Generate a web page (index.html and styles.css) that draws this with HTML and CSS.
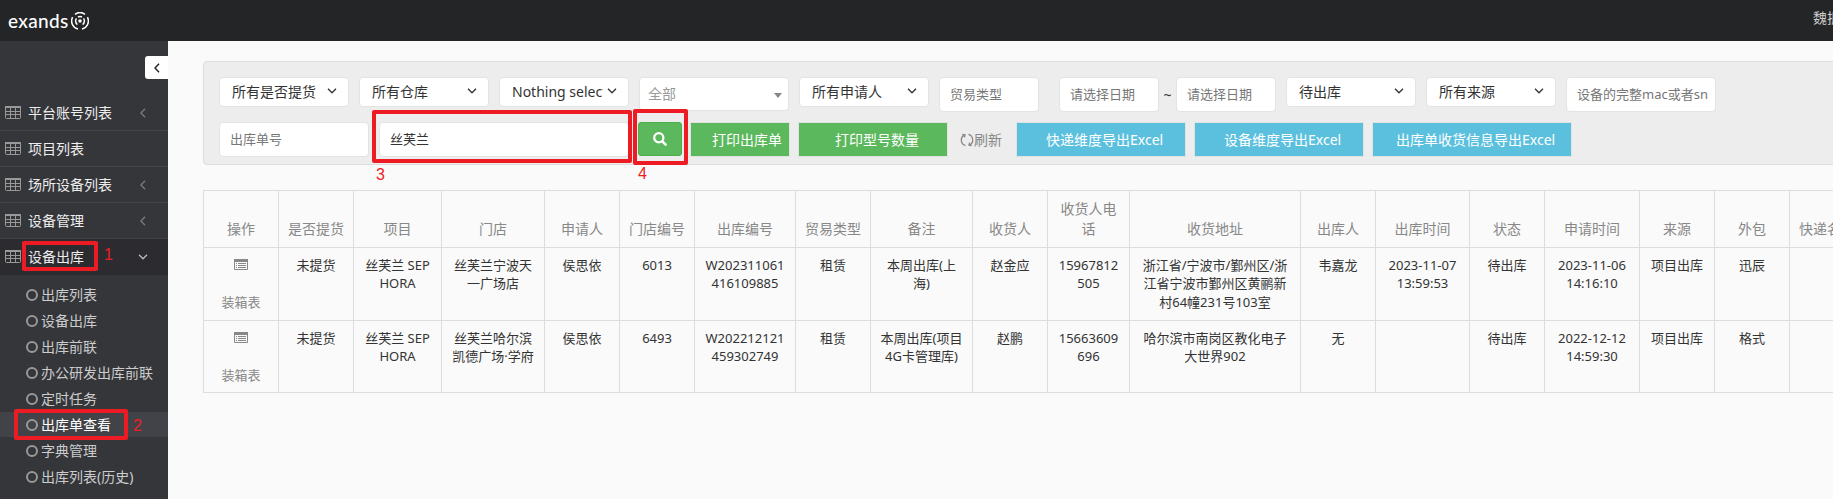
FILE: index.html
```html
<!DOCTYPE html>
<html lang="zh-CN">
<head>
<meta charset="utf-8">
<title>出库单查看</title>
<link rel="stylesheet" href="styles.css">
</head>
<body>
<svg class="defs" width="0" height="0">
  <symbol id="grid" viewBox="0 0 16 13"><path d="M.5 1v10.500q0 1 1 1h13q1 0 1-1V1z" fill="none" stroke="currentColor"/><path d="M0 0h16v2H0z" fill="currentColor"/><path d="M1 5.500h14M1 8.500h14M5.500 2v10M10.500 2v10" fill="none" stroke="currentColor"/></symbol>
  <symbol id="left" viewBox="0 0 6 10"><path d="M5 .8 1 5l4 4.200" fill="none" stroke="currentColor" stroke-width="1.400"/></symbol>
  <symbol id="down" viewBox="0 0 10 6"><path d="M1 .8 5 4.800l4-4" fill="none" stroke="currentColor" stroke-width="1.300"/></symbol>
  <symbol id="list" viewBox="0 0 14 11"><path d="M.5 1h13v9.500H.5z" fill="none" stroke="currentColor"/><path d="M0 0h14v3H0z" fill="currentColor"/><path d="M2 4.500h1M4 4.500h8M2 6.500h1M4 6.500h8M2 8.500h1M4 8.500h8" stroke="currentColor"/></symbol>
</svg>
<header class="topbar">
  <div class="logo"><span>exands</span>
    <svg width="18" height="18" viewBox="0 0 18 18" fill="none" stroke="#fff" stroke-width="1.500"><circle cx="9" cy="9" r="1.800" fill="#fff" stroke="none"/><path d="M6.400 12.600a4.400 4.400 0 0 1-.9-6.200M11.600 12.600a4.400 4.400 0 0 0 .9-6.200M7 5a4.500 4.500 0 0 1 4 0M4 2.300a8.400 8.400 0 0 1 10 0M1.600 5.200A8.300 8.300 0 0 0 7 17.100M16.400 5.200A8.300 8.300 0 0 1 11 17.100"/></svg>
  </div>
  <div class="user">魏振</div>
</header>
<div class="layout">
  <nav class="sidebar">
    <button class="collapse"><svg width="6" height="10"><use href="#left"/></svg></button>
    <ul class="menu">
      <li><svg class="mi" width="16" height="13"><use href="#grid"/></svg>平台账号列表<svg class="arr" width="6" height="10"><use href="#left"/></svg></li>
      <li><svg class="mi" width="16" height="13"><use href="#grid"/></svg>项目列表</li>
      <li><svg class="mi" width="16" height="13"><use href="#grid"/></svg>场所设备列表<svg class="arr" width="6" height="10"><use href="#left"/></svg></li>
      <li><svg class="mi" width="16" height="13"><use href="#grid"/></svg>设备管理<svg class="arr" width="6" height="10"><use href="#left"/></svg></li>
      <li class="open"><svg class="mi" width="16" height="13"><use href="#grid"/></svg>设备出库<svg class="arr" width="10" height="6"><use href="#down"/></svg></li>
    </ul>
    <ul class="submenu">
      <li>出库列表</li><li>设备出库</li><li>出库前联</li><li>办公研发出库前联</li><li>定时任务</li><li class="active">出库单查看</li><li>字典管理</li><li>出库列表(历史)</li>
    </ul>
  </nav>
  <main class="content">
    <section class="filters">
      <div class="frow">
        <div class="sel"><span>所有是否提货</span><svg width="10" height="6"><use href="#down"/></svg></div>
        <div class="sel"><span>所有仓库</span><svg width="10" height="6"><use href="#down"/></svg></div>
        <div class="sel"><span>Nothing selected</span><svg width="10" height="6"><use href="#down"/></svg></div>
        <div class="combo"><span>全部</span><i></i></div>
        <div class="sel"><span>所有申请人</span><svg width="10" height="6"><use href="#down"/></svg></div>
        <div class="inp w100">贸易类型</div>
        <div class="range"><div class="inp w100">请选择日期</div><span>~</span><div class="inp w100">请选择日期</div></div>
        <div class="sel"><span>待出库</span><svg width="10" height="6"><use href="#down"/></svg></div>
        <div class="sel"><span>所有来源</span><svg width="10" height="6"><use href="#down"/></svg></div>
        <div class="inp w150">设备的完整mac或者sn</div>
      </div>
      <div class="frow second">
        <div class="inp w150">出库单号</div>
        <div class="inp w250 filled">丝芙兰</div>
        <button class="search"><svg width="14" height="14" viewBox="0 0 14 14" fill="none" stroke="#fff"><circle cx="5.800" cy="5.800" r="4.600" stroke-width="2.200"/><path d="m9.300 9.300 3.300 3.300" stroke-width="2.600" stroke-linecap="round"/></svg></button>
        <div class="btn green b1">打印出库单</div>
        <div class="btn green b2">打印型号数量</div>
        <div class="refresh"><svg width="14" height="14" viewBox="0 0 14 14" fill="none" stroke="#888" stroke-width="1.300"><path d="M5.500 12.600A5.800 5.800 0 0 1 4.600 1.800M8.500 1.400A5.800 5.800 0 0 1 9.400 12.200M2.300 1.300 5 1.700l-.6 2.600M11.700 12.700 9 12.300l.6-2.600"/></svg>刷新</div>
        <div class="btn blue b3">快递维度导出Excel</div>
        <div class="btn blue b4">设备维度导出Excel</div>
        <div class="btn blue b5">出库单收货信息导出Excel</div>
      </div>
    </section>
    <table class="orders">
      <colgroup><col class="c75"><col class="c75"><col class="c88"><col class="c103"><col class="c75"><col class="c75"><col class="c101"><col class="c75"><col class="c102"><col class="c75"><col class="c82"><col class="c171"><col class="c75"><col class="c94"><col class="c75"><col class="c95"><col class="c75"><col class="c75"><col class="c75"></colgroup>
      <thead><tr><th>操作</th><th>是否提货</th><th>项目</th><th>门店</th><th>申请人</th><th>门店编号</th><th>出库编号</th><th>贸易类型</th><th>备注</th><th>收货人</th><th>收货人电<br>话</th><th>收货地址</th><th>出库人</th><th>出库时间</th><th>状态</th><th>申请时间</th><th>来源</th><th>外包</th><th>快递名称</th></tr></thead>
      <tbody>
        <tr><td><div class="ops"><svg width="14" height="11"><use href="#list"/></svg><span>装箱表</span></div></td><td>未提货</td><td>丝芙兰 SEP<br>HORA</td><td>丝芙兰宁波天<br>一广场店</td><td>侯思依</td><td>6013</td><td>W202311061<br>416109885</td><td>租赁</td><td>本周出库(上<br>海)</td><td>赵金应</td><td>15967812<br>505</td><td>浙江省/宁波市/鄞州区/浙<br>江省宁波市鄞州区黄鹂新<br>村64幢231号103室</td><td>韦嘉龙</td><td>2023-11-07<br>13:59:53</td><td>待出库</td><td>2023-11-06<br>14:16:10</td><td>项目出库</td><td>迅辰</td><td></td></tr>
        <tr><td><div class="ops"><svg width="14" height="11"><use href="#list"/></svg><span>装箱表</span></div></td><td>未提货</td><td>丝芙兰 SEP<br>HORA</td><td>丝芙兰哈尔滨<br>凯德广场·学府</td><td>侯思依</td><td>6493</td><td>W202212121<br>459302749</td><td>租赁</td><td>本周出库(项目<br>4G卡管理库)</td><td>赵鹏</td><td>15663609<br>696</td><td>哈尔滨市南岗区教化电子<br>大世界902</td><td>无</td><td></td><td>待出库</td><td>2022-12-12<br>14:59:30</td><td>项目出库</td><td>格式</td><td></td></tr>
      </tbody>
    </table>
  </main>
</div>
<div class="mark m1"></div><div class="num n1">1</div>
<div class="mark m2"></div><div class="num n2">2</div>
<div class="mark m3"></div><div class="num n3">3</div>
<div class="mark m4"></div><div class="num n4">4</div>
</body>
</html>
```
FILE: styles.css
```css
*, *::before { box-sizing: border-box; }
html, body { height: 100%; }
body { position: relative; margin: 0; overflow: hidden; background: #fafafa; color: #333; font: 14px/20px "Noto Sans", "Noto Sans CJK SC", sans-serif; display: flex; flex-direction: column; }
.defs { position: absolute; }
ul { list-style: none; margin: 0; padding: 0; }
button { border: 0; padding: 0; }

.topbar { height: 41px; flex: none; background: #242527; display: flex; justify-content: space-between; }
.logo { display: flex; align-items: center; gap: 3px; padding: 0 0 0 8px; color: #fff; font: 500 19px/24px Lato, sans-serif; letter-spacing: .35px; }
.logo span { width: 60px; white-space: nowrap; }
.user { width: 20px; margin-top: 8px; color: #ccc; white-space: nowrap; overflow: hidden; }

.layout { flex: 1; min-height: 0; display: flex; }
.sidebar { width: 168px; flex: none; background: #35363a; display: flex; flex-direction: column; }
.collapse { align-self: flex-end; width: 23px; height: 23px; margin-top: 15px; background: #fff; color: #222; border-radius: 3px 0 0 3px; display: flex; align-items: center; justify-content: center; }
.menu { margin-top: 16px; }
.menu li { height: 36px; padding: 0 22px 0 5px; border-bottom: 1px solid #43444a; display: flex; align-items: center; color: #eee; }
.menu li.open { background: #2c2b30; border-bottom: 0; }
.mi { color: #999; margin: -1px 7px 0 0; }
.arr { margin-left: auto; color: #77787c; }
.open .arr { color: #bbb; margin-right: -2px; }
.submenu { margin-top: 7px; }
.submenu li { height: 25px; margin-bottom: 1px; padding-left: 26px; display: flex; align-items: center; gap: 3px; color: #ccc; white-space: nowrap; }
.submenu li::before { content: ""; width: 12px; height: 12px; border: 2px solid #999; border-radius: 50%; }
.submenu .active { background: #424348; color: #fff; }

.content { flex: 1; min-width: 0; padding: 20px 0 0 35px; overflow: hidden; }
.filters { width: 1700px; height: 104px; background: #ededed; border: 1px solid #ddd; border-radius: 4px; padding: 15px; }
.frow { display: flex; gap: 10px; align-items: flex-start; height: 45px; }
.sel { width: 130px; height: 30px; flex: none; display: flex; justify-content: space-between; align-items: center; padding: 0 12px 0 12px; background: #fff; border: 1px solid #e3e3e3; border-radius: 4px; }
.sel span { width: 91px; overflow: hidden; white-space: nowrap; }
.sel svg { flex: none; margin: -3px -1px 0 0; }
.combo { width: 150px; height: 34px; flex: none; display: flex; justify-content: space-between; align-items: center; padding: 0 6px 0 8px; background: #fff; border: 1px solid #e3e3e3; border-radius: 4px; color: #999; }
.combo i { border: 4px solid transparent; border-top: 5px solid #888; border-bottom: 0; margin-top: 2px; }
.inp { height: 35px; flex: none; background: #fff; border: 1px solid #e3e3e3; border-radius: 4px; padding: 0 10px; color: #777; font-size: 13px; line-height: 33px; white-space: nowrap; overflow: hidden; }
.filled { color: #333; }
.w100 { width: 100px; } .w150 { width: 150px; } .w250 { width: 250px; }
.range { display: flex; width: 218px; flex: none; margin: 0 -1px 0 10px; }
.range span { width: 17px; text-align: center; line-height: 36px; }
.second { gap: 0; height: 35px; }
.second .w250 { margin: 0 9px 0 10px; }
.search { width: 44px; height: 34px; background: #5cb85c; border: 1px solid #4cae4c; border-radius: 3px; display: flex; align-items: center; justify-content: center; flex: none; }
.btn { height: 35px; flex: none; border: 1px solid #e0e4e0; color: #fff; line-height: 33px; white-space: nowrap; }
.green { background: #5cb85c; }
.blue { background: #5bc0de; }
.b1 { width: 100px; margin-left: 8px; padding-left: 21px; }
.b2 { width: 150px; margin-left: 8px; padding-left: 36px; }
.refresh { width: 68px; padding-left: 12px; display: flex; align-items: center; height: 36px; color: #888; }
.b3 { width: 170px; padding-left: 29px; }
.b4 { width: 170px; margin-left: 8px; padding-left: 29px; }
.b5 { width: 200px; margin-left: 8px; padding-left: 23px; }

.orders { width: 1662px; margin-top: 25px; table-layout: fixed; border-collapse: collapse; text-align: center; }
.orders th, .orders td { border: 1px solid #ddd; padding: 0; white-space: nowrap; }
.orders th { height: 57px; vertical-align: bottom; padding-bottom: 8px; color: #888; font-weight: 400; }
.orders td { height: 72px; vertical-align: top; padding-top: 7.5px; font-size: 13px; line-height: 18.57px; }
.orders tbody tr:first-child td { height: 73px; }
.ops { display: flex; flex-direction: column; align-items: center; color: #888; padding-top: 3.5px; }
.ops span { margin-top: 22.5px; }
.c75 { width: 75px; } .c82 { width: 82px; } .c88 { width: 88px; } .c94 { width: 94px; } .c95 { width: 95px; }
.c101 { width: 101px; } .c102 { width: 102px; } .c103 { width: 103px; } .c171 { width: 171px; }

.mark { position: absolute; border: 4px solid #ed1c24; border-radius: 2px; }
.m1 { left: 22px; top: 241px; width: 76px; height: 30px; }
.m2 { left: 14px; top: 409px; width: 114px; height: 31px; }
.m3 { left: 372px; top: 110px; width: 260px; height: 53px; }
.m4 { left: 633px; top: 109px; width: 55px; height: 56px; }
.num { position: absolute; color: #ed1c24; font: 16px/18px "Liberation Sans", sans-serif; }
.n1 { left: 104px; top: 246px; }
.n2 { left: 133px; top: 417px; }
.n3 { left: 376px; top: 166px; }
.n4 { left: 638px; top: 165px; }
```
